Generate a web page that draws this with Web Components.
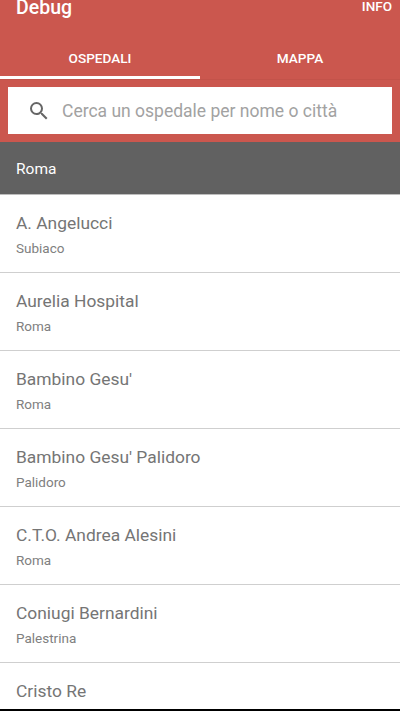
<!DOCTYPE html>
<html>
<head>
<meta charset="utf-8">
<style>
  html, body { margin: 0; padding: 0; background: #fff; }
  body { width: 400px; height: 711px; overflow: hidden; font-family: Roboto, sans-serif; display: flex; flex-direction: column; }
  hospital-list { flex: 1; min-height: 0; }
</style>
</head>
<body>
<app-header title="Debug" action="INFO"></app-header>
<section-title>Roma</section-title>
<hospital-list>
  <hospital-row name="A. Angelucci" city="Subiaco"></hospital-row>
  <hospital-row name="Aurelia Hospital" city="Roma"></hospital-row>
  <hospital-row name="Bambino Gesu'" city="Roma"></hospital-row>
  <hospital-row name="Bambino Gesu' Palidoro" city="Palidoro"></hospital-row>
  <hospital-row name="C.T.O. Andrea Alesini" city="Roma"></hospital-row>
  <hospital-row name="Coniugi Bernardini" city="Palestrina"></hospital-row>
  <hospital-row name="Cristo Re" city=""></hospital-row>
</hospital-list>
<script>
class AppHeader extends HTMLElement {
  connectedCallback() {
    this.attachShadow({ mode: 'open' });
    this.shadowRoot.innerHTML = `
      <style>
        :host { display: block; background: #cb574e; color: #fff; block-size: 142px; flex: none; }
        .top { display: flex; justify-content: space-between; block-size: 37px; padding: 0 8px 0 16px; }
        .title { font-size: 19.5px; font-weight: 500; line-height: 15px; }
        .action { font-size: 13.5px; font-weight: 500; line-height: 13px; }
        .tabs { display: flex; block-size: 42px; box-shadow: 0 1px 0 rgba(0,0,0,.04); }
        .tab { flex: 1; display: flex; align-items: center; justify-content: center; font-size: 13.6px; font-weight: 500; padding-block: 3px; box-sizing: border-box; }
        .tab.active { border-block-end: 3px solid #fff; padding-block-end: 0; }
        .search { display: flex; align-items: center; margin: 8px 8px 0; block-size: 47px; background: #fff; }
        svg { margin-inline-start: 19px; inline-size: 24px; block-size: 24px; flex: none; }
        .hint { margin-inline-start: 11px; font-size: 17.5px; color: #a2a2a2; white-space: nowrap; }
      </style>
      <div class="top">
        <span class="title">${this.getAttribute('title')}</span>
        <span class="action">${this.getAttribute('action')}</span>
      </div>
      <div class="tabs">
        <div class="tab active">OSPEDALI</div>
        <div class="tab">MAPPA</div>
      </div>
      <div class="search">
        <svg viewBox="0 0 24 24" fill="#666"><path d="M15.5 14h-.79l-.28-.27A6.47 6.47 0 0 0 16 9.5 6.5 6.5 0 1 0 9.5 16c1.61 0 3.09-.59 4.23-1.57l.27.28v.79l5 4.99L20.49 19l-4.99-5zm-6 0C7.01 14 5 11.99 5 9.5S7.01 5 9.5 5 14 7.01 14 9.5 11.99 14 9.5 14z"/></svg>
        <span class="hint">Cerca un ospedale per nome o città</span>
      </div>
    `;
  }
}
customElements.define('app-header', AppHeader);

class SectionTitle extends HTMLElement {
  connectedCallback() {
    this.attachShadow({ mode: 'open' });
    this.shadowRoot.innerHTML = `
      <style>
        :host { display: flex; align-items: center; flex: none; box-sizing: border-box; block-size: 53px; padding: 1px 16px 0; background: #616161; color: #fff; font-size: 15.5px; border-block-end: 1px solid #bdbdbd; }
      </style>
      <slot></slot>
    `;
  }
}
customElements.define('section-title', SectionTitle);

class HospitalList extends HTMLElement {
  connectedCallback() {
    this.attachShadow({ mode: 'open' });
    this.shadowRoot.innerHTML = `
      <style>
        :host { display: block; overflow: hidden; border-block-end: 2px solid #000; }
      </style>
      <slot></slot>
    `;
  }
}
customElements.define('hospital-list', HospitalList);

class HospitalRow extends HTMLElement {
  connectedCallback() {
    this.attachShadow({ mode: 'open' });
    this.shadowRoot.innerHTML = `
      <style>
        :host { display: block; box-sizing: border-box; block-size: 78px; padding: 16px 16px 0; border-block-end: 1px solid #cfcfcf; }
        .name { font-size: 17.4px; line-height: 24px; color: #757575; }
        .city { font-size: 13.5px; line-height: 20px; color: #808080; margin-block-start: 3px; }
      </style>
      <div class="name">${this.getAttribute('name')}</div>
      <div class="city">${this.getAttribute('city')}</div>
    `;
  }
}
customElements.define('hospital-row', HospitalRow);
</script>
</body>
</html>
